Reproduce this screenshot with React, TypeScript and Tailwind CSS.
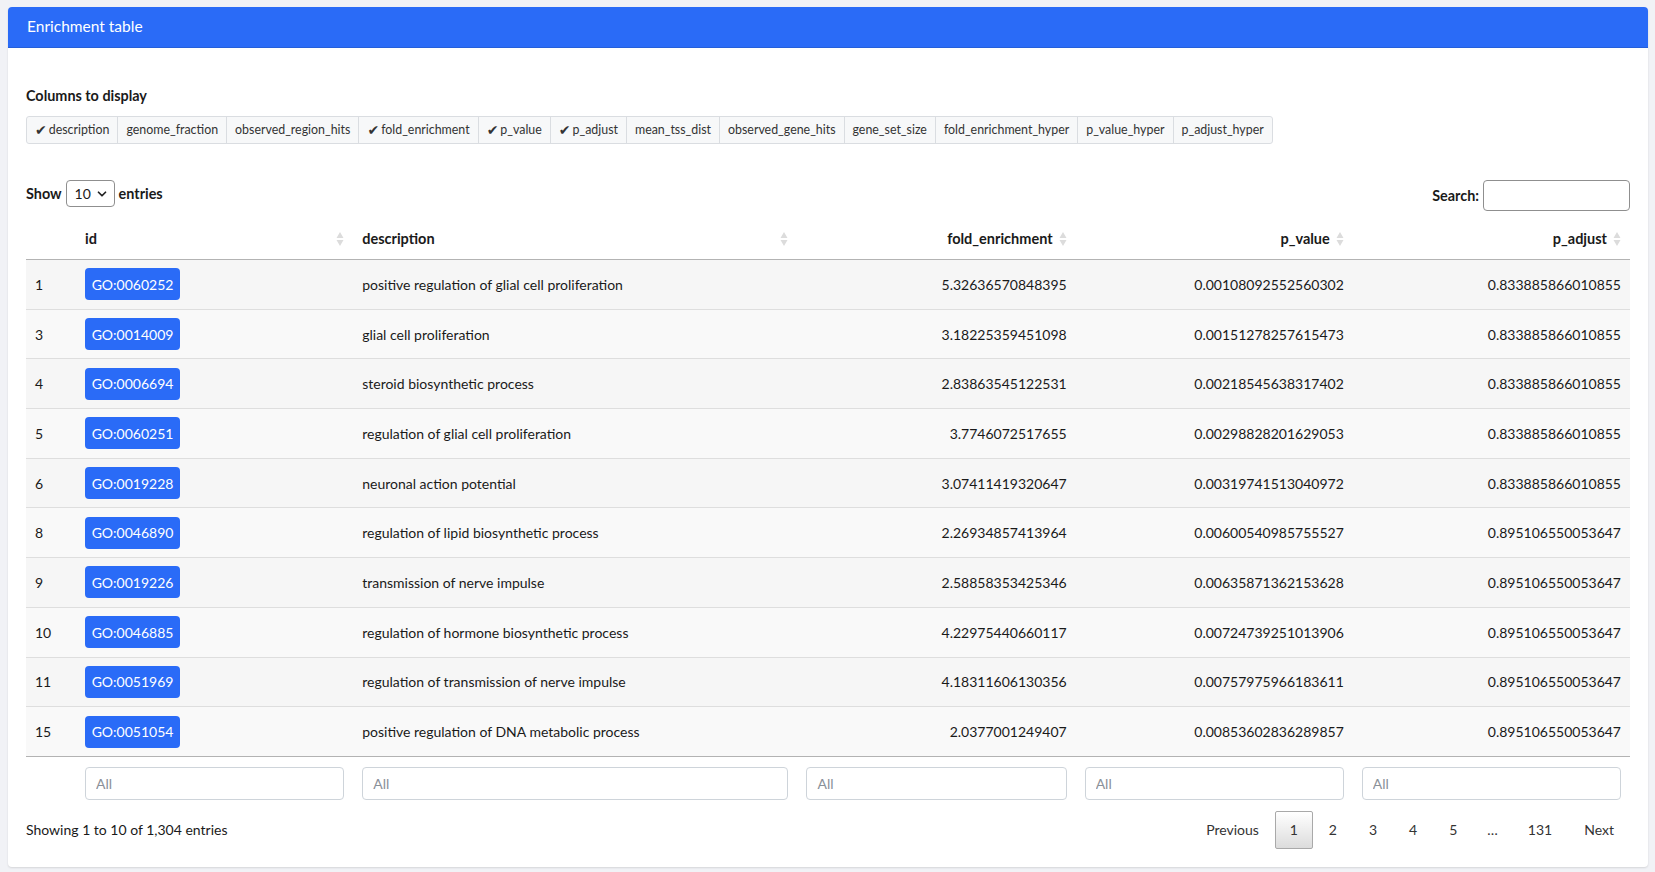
import { ChevronDown } from "lucide-react";

const columnChoices = [
  { name: "description", on: true },
  { name: "genome_fraction", on: false },
  { name: "observed_region_hits", on: false },
  { name: "fold_enrichment", on: true },
  { name: "p_value", on: true },
  { name: "p_adjust", on: true },
  { name: "mean_tss_dist", on: false },
  { name: "observed_gene_hits", on: false },
  { name: "gene_set_size", on: false },
  { name: "fold_enrichment_hyper", on: false },
  { name: "p_value_hyper", on: false },
  { name: "p_adjust_hyper", on: false },
];

const rows = [
  { n: 1, id: "GO:0060252", desc: "positive regulation of glial cell proliferation", fe: "5.32636570848395", pv: "0.00108092552560302", pa: "0.833885866010855" },
  { n: 3, id: "GO:0014009", desc: "glial cell proliferation", fe: "3.18225359451098", pv: "0.00151278257615473", pa: "0.833885866010855" },
  { n: 4, id: "GO:0006694", desc: "steroid biosynthetic process", fe: "2.83863545122531", pv: "0.00218545638317402", pa: "0.833885866010855" },
  { n: 5, id: "GO:0060251", desc: "regulation of glial cell proliferation", fe: "3.7746072517655", pv: "0.00298828201629053", pa: "0.833885866010855" },
  { n: 6, id: "GO:0019228", desc: "neuronal action potential", fe: "3.07411419320647", pv: "0.00319741513040972", pa: "0.833885866010855" },
  { n: 8, id: "GO:0046890", desc: "regulation of lipid biosynthetic process", fe: "2.26934857413964", pv: "0.00600540985755527", pa: "0.895106550053647" },
  { n: 9, id: "GO:0019226", desc: "transmission of nerve impulse", fe: "2.58858353425346", pv: "0.00635871362153628", pa: "0.895106550053647" },
  { n: 10, id: "GO:0046885", desc: "regulation of hormone biosynthetic process", fe: "4.22975440660117", pv: "0.00724739251013906", pa: "0.895106550053647" },
  { n: 11, id: "GO:0051969", desc: "regulation of transmission of nerve impulse", fe: "4.18311606130356", pv: "0.00757975966183611", pa: "0.895106550053647" },
  { n: 15, id: "GO:0051054", desc: "positive regulation of DNA metabolic process", fe: "2.0377001249407", pv: "0.00853602836289857", pa: "0.895106550053647" },
];

function SortIcon() {
  return (
    <svg width="8" height="16" viewBox="0 0 8 16" className="shrink-0">
      <path d="M4 1 L7.5 7 L0.5 7 Z M4 15 L7.5 9 L0.5 9 Z" fill="#dcdcdc" />
    </svg>
  );
}

function FilterInput() {
  return (
    <input
      placeholder="All"
      className="w-full h-[33px] border border-[#ced4da] rounded-[4px] px-[10px] text-[14px] text-[#333] placeholder:text-[#8a9099] bg-white outline-none"
    />
  );
}

export default function App() {
  return (
    <div className="min-h-[872px] bg-[#f1f2f6] pt-[7px] pl-[8px] pr-[7px] pb-[5px] font-['Lato',sans-serif] text-[#1a1a1a]">
      <div className="bg-white rounded-[4px] shadow-[0_1px_2px_rgba(0,0,0,0.12)] overflow-hidden">
        <div className="h-[41px] bg-[#2a6bf7] border-b border-[#255fd9] flex items-center pl-[19px] text-white text-[15.5px]">
          Enrichment table
        </div>

        <div className="px-[18px] pt-[38px] pb-[18px]">
          <div className="text-[14.4px] font-bold leading-[20px]">Columns to display</div>

          <div className="mt-[10px] inline-flex border border-[#dadde1] rounded-[3px] bg-[#f7f8f9] h-[28px]">
            {columnChoices.map((c, i) => (
              <div
                key={c.name}
                className={`flex items-center px-[8px] text-[12.4px] text-[#333] ${i > 0 ? "border-l border-[#dadde1]" : ""}`}
              >
                {c.on && <span className="font-['DejaVu_Sans',sans-serif] text-[14px] leading-none mr-[2px] text-[#333]">✔</span>}
                {c.name}
              </div>
            ))}
          </div>

          <div className="mt-[36px] flex items-start justify-between h-[31px]">
            <div className="flex items-center gap-[4px] text-[14.4px] font-bold h-[27px]">
              <span>Show</span>
              <div className="w-[49px] h-[27px] border border-[#8f8f8f] rounded-[4px] flex items-center justify-between pl-[8px] pr-[5px] font-normal text-[14px] bg-white">
                <span>10</span>
                <ChevronDown className="w-[14px] h-[14px] text-[#222]" strokeWidth={3} />
              </div>
              <span>entries</span>
            </div>
            <div className="flex items-center gap-[4px] text-[14.4px] font-bold h-[31px]">
              <span>Search:</span>
              <input className="w-[147px] h-[31px] border border-[#8f8f8f] rounded-[4px] bg-white outline-none px-2" />
            </div>
          </div>

          <table className="mt-[8px] w-full table-fixed border-collapse text-[14px]">
            <colgroup>
              <col className="w-[50px]" />
              <col className="w-[277px]" />
              <col className="w-[444px]" />
              <col className="w-[278px]" />
              <col className="w-[277px]" />
              <col className="w-[277px]" />
            </colgroup>
            <thead>
              <tr className="border-b border-[#b3b3b3] text-[14.5px]">
                <th className="pt-[10px] pb-[10px]"></th>
                <th className="px-[9px] pt-[10px] pb-[10px] font-bold text-left">
                  <div className="flex items-center justify-between leading-[20px]">
                    <span>id</span>
                    <SortIcon />
                  </div>
                </th>
                <th className="px-[9px] pt-[10px] pb-[10px] font-bold text-left">
                  <div className="flex items-center justify-between leading-[20px]">
                    <span>description</span>
                    <SortIcon />
                  </div>
                </th>
                {["fold_enrichment", "p_value", "p_adjust"].map((h) => (
                  <th key={h} className="px-[9px] pt-[10px] pb-[10px] font-bold">
                    <div className="flex items-center justify-end gap-[6px] leading-[20px]">
                      <span>{h}</span>
                      <SortIcon />
                    </div>
                  </th>
                ))}
              </tr>
            </thead>
            <tbody>
              {rows.map((r, i) => (
                <tr
                  key={r.id}
                  className={`h-[49.7px] ${i === rows.length - 1 ? "border-b border-[#b3b3b3]" : "border-b border-[#dedede]"} ${i % 2 === 0 ? "bg-[#f6f6f6]" : "bg-[#f9f9f9]"}`}
                >
                  <td className="pl-[9px]">{r.n}</td>
                  <td className="px-[9px]">
                    <button className="w-[95px] h-[32px] rounded-[4px] bg-[#2a6bf7] text-white text-[14px]">
                      {r.id}
                    </button>
                  </td>
                  <td className="px-[9px]">{r.desc}</td>
                  <td className="px-[9px] text-right">{r.fe}</td>
                  <td className="px-[9px] text-right">{r.pv}</td>
                  <td className="px-[9px] text-right">{r.pa}</td>
                </tr>
              ))}
            </tbody>
            <tfoot>
              <tr>
                <td className="py-[10px]"></td>
                <td className="px-[9px] py-[10px]"><FilterInput /></td>
                <td className="px-[9px] py-[10px]"><FilterInput /></td>
                <td className="px-[9px] py-[10px]"><FilterInput /></td>
                <td className="px-[9px] py-[10px]"><FilterInput /></td>
                <td className="px-[9px] py-[10px]"><FilterInput /></td>
              </tr>
            </tfoot>
          </table>

          <div className="mt-[1px] flex items-center justify-between text-[14px]">
            <div>Showing 1 to 10 of 1,304 entries</div>
            <div className="flex items-center text-[#333]">
              <span className="px-[16px] h-[38px] flex items-center">Previous</span>
              <span className="w-[38px] h-[38px] flex items-center justify-center border border-[#a9a9a9] rounded-[2px] bg-gradient-to-b from-white to-[#dcdcdc]">1</span>
              {["2", "3", "4", "5"].map((p) => (
                <span key={p} className="px-[16px] h-[38px] flex items-center">{p}</span>
              ))}
              <span className="px-[14px] h-[38px] flex items-center">…</span>
              <span className="px-[16px] h-[38px] flex items-center">131</span>
              <span className="px-[16px] h-[38px] flex items-center">Next</span>
            </div>
          </div>
        </div>
      </div>
    </div>
  );
}
